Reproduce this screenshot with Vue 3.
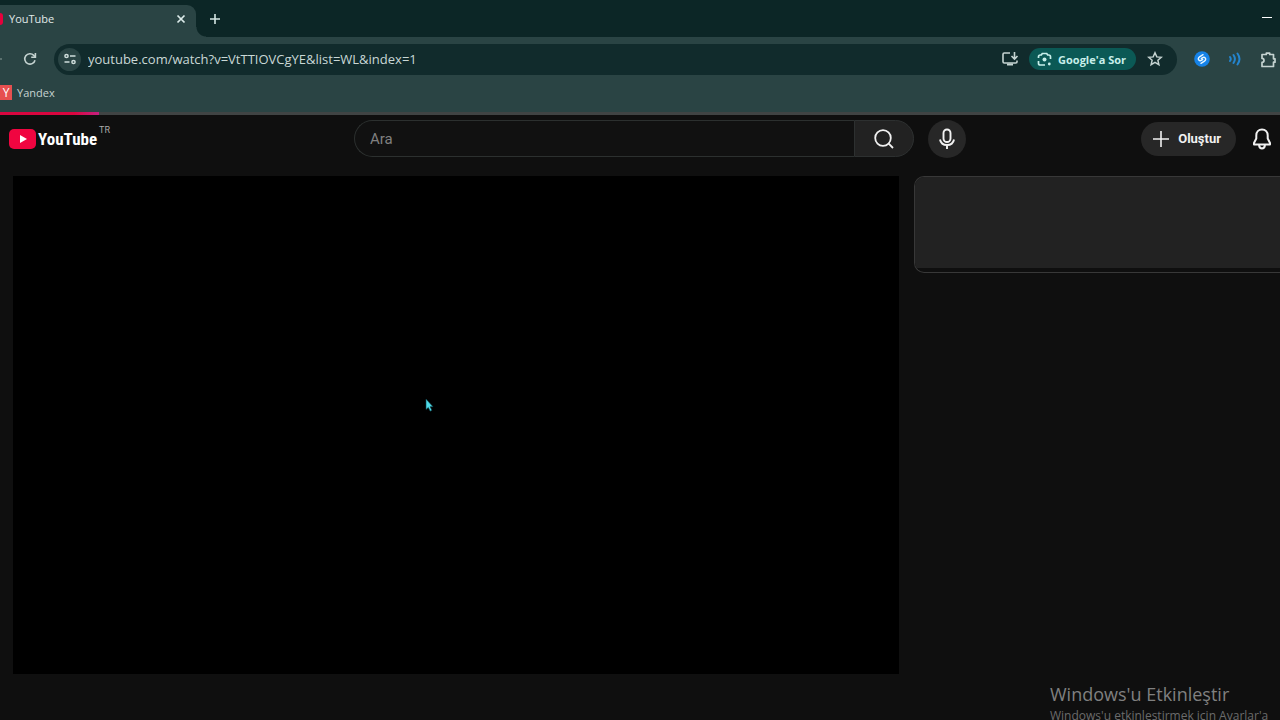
<script setup>
import { ref } from 'vue'

const address = ref('youtube.com/watch?v=VtTTIOVCgYE&list=WL&index=1')
const query = ref('')
</script>

<template>
  <div class="window">
    <div class="tabstrip">
      <div class="tab">
        <span class="favicon"></span>
        <span class="tab-title">YouTube</span>
        <button class="icon-btn tab-close" aria-label="Sekmeyi kapat">
          <svg width="10" height="10" viewBox="0 0 10 10"><path d="M1.5 1.5l7 7M8.5 1.5l-7 7" stroke="#dcebea" stroke-width="1.7" /></svg>
        </button>
      </div>
      <button class="icon-btn new-tab" aria-label="Yeni sekme">
        <svg width="12" height="12" viewBox="0 0 12 12"><path d="M6 1v10M1 6h10" stroke="#d5e6e4" stroke-width="1.6" /></svg>
      </button>
      <button class="icon-btn minimize" aria-label="Simge durumuna küçült">
        <svg width="10" height="10" viewBox="0 0 10 10"><path d="M0 3.5h10" stroke="#fff" stroke-width="1" /></svg>
      </button>
    </div>

    <div class="toolbar">
      <span class="forward"></span>
      <button class="icon-btn reload" aria-label="Yenile">
        <svg width="14" height="14" viewBox="0 0 14 14" fill="none" stroke="#c5d3d1" stroke-width="1.6"><path d="M12 8.2A5.2 5.2 0 1 1 10.8 3.4L12.3 5" /><path d="M12.4 1v4.3H8.2" /></svg>
      </button>
      <div class="omnibox">
        <button class="site-info" aria-label="Site bilgileri">
          <svg width="14" height="14" viewBox="0 0 14 14" fill="none" stroke="#cfdddb" stroke-width="1.5"><circle cx="3.5" cy="4" r="1.6" /><path d="M7 4h5.5M1.5 10h5" /><circle cx="10.5" cy="10" r="1.6" /></svg>
        </button>
        <input v-model="address" class="url" type="text" aria-label="Adres çubuğu" />
        <button class="icon-btn" aria-label="Uygulamayı yükle">
          <svg width="18" height="16" viewBox="0 0 18 16" fill="none" stroke="#c5d3d1" stroke-width="1.6"><path d="M9 2H3.200Q2 2 2 3.200v7.600Q2 12 3.200 12h11.600Q16 12 16 10.800V9.500" /><path d="M13.500 1v6.500M10.500 5l3 3 3-3" /><path d="M6 13.500h6" stroke-width="2" /></svg>
        </button>
        <button class="ask">
          <svg width="15" height="15" viewBox="0 0 15 15" fill="none" stroke="#c7efea" stroke-width="1.7"><path d="M1.500 6V4.800Q1.500 3 3.300 3h1l1-1.500h4.400l1 1.500h1q1.800 0 1.800 1.800V7M1.500 9v2.200Q1.500 13 3.300 13H8" /><circle cx="7.500" cy="7.500" r="2" fill="#c7efea" stroke="none" /><circle cx="12.300" cy="12" r="1.400" fill="#c7efea" stroke="none" /></svg>
          <span>Google'a Sor</span>
        </button>
        <button class="icon-btn star" aria-label="Yer işareti ekle">
          <svg width="16" height="16" viewBox="0 0 16 16" fill="none" stroke="#c5d3d1" stroke-width="1.500"><path d="M8 1.800l1.800 4.100 4.500.4-3.400 3 1 4.400L8 11.400l-3.900 2.300 1-4.400-3.400-3 4.500-.4z" /></svg>
        </button>
      </div>
      <div class="extensions">
        <button class="icon-btn" aria-label="Shazam">
          <svg width="16" height="16" viewBox="0 0 16 16" fill="none"><circle cx="8" cy="8" r="7.800" fill="#1683e8" /><path d="M9 3.700L5.600 5.800Q3.500 7.600 4.800 9.100q1.200 1.200 2.900.1l1-.8M7 12.300l3.400-2.100q2.100-1.800.8-3.300-1.200-1.200-2.900-.1l-1 .8" stroke="#e8f6ff" stroke-width="1.400" stroke-linecap="round" /></svg>
        </button>
        <button class="icon-btn" aria-label="Ses denetimi">
          <svg width="14" height="14" viewBox="0 0 14 14" fill="none" stroke="#2485cf" stroke-width="2" stroke-linecap="round"><path d="M2 5q1.500 2 0 4M5.500 3q2.800 4 0 8M9.500 1.500q4 5.500 0 11" /></svg>
        </button>
        <button class="icon-btn" aria-label="Uzantılar">
          <svg width="17" height="17" viewBox="0 0 17 17" fill="none" stroke="#c5d3d1" stroke-width="1.700" stroke-linejoin="round"><path d="M2 3.500h4.300v-1.300h3.400v1.300h3.800v4.300h1.500v3.400h-1.500v4.300H2v-4.100q2-.2 2-2t-2-2z" /></svg>
        </button>
      </div>
    </div>

    <nav class="bookmarks">
      <a href="#yandex"><span class="yandex">Y</span>Yandex</a>
    </nav>
    <div class="progress"><span></span></div>

    <header class="masthead">
      <a class="logo" href="#home">
        <svg width="27" height="20" viewBox="0 0 27 20"><rect width="27" height="20" rx="5" fill="#f00540" /><path d="M11 6l7 4-7 4z" fill="#fff" /></svg>
        <span class="wordmark">YouTube</span>
        <sup>TR</sup>
      </a>
      <div class="center">
        <form class="search" role="search" @submit.prevent>
          <input v-model="query" type="text" placeholder="Ara" aria-label="Ara" />
          <button aria-label="Aramayı başlat">
            <svg width="22" height="22" viewBox="0 0 22 22" fill="none" stroke="#f1f1f1" stroke-width="1.800"><circle cx="10" cy="10" r="7.800" /><path d="M15.700 15.700l4.300 4.300" /></svg>
          </button>
        </form>
        <button class="mic" aria-label="Sesle ara">
          <svg width="18" height="22" viewBox="0 0 18 22" fill="none" stroke="#f1f1f1" stroke-width="1.900"><rect x="5.500" y="1.500" width="7" height="12.500" rx="3.500" /><path d="M2 11.500q1 5.500 7 5.500t7-5.500M9 17v4" /></svg>
        </button>
      </div>
      <div class="actions">
        <button class="create">
          <svg width="18" height="18" viewBox="0 0 18 18"><path d="M9 1v16M1 9h16" stroke="#f1f1f1" stroke-width="1.600" /></svg>
          <span>Oluştur</span>
        </button>
        <button class="icon-btn" aria-label="Bildirimler">
          <svg width="20" height="22" viewBox="0 0 20 22" fill="none" stroke="#f1f1f1" stroke-width="2" stroke-linejoin="round"><path d="M10 1.500c-3.500 0-5.700 2.400-5.700 5.800v3.200L2 15v1.500h16V15l-2.300-4.500V7.300c0-3.400-2.200-5.800-5.700-5.800z" /><path d="M7 17q.5 3.500 3 3.500t3-3.500" /></svg>
        </button>
      </div>
    </header>

    <main class="watch">
      <section class="player" aria-label="Video oynatıcı">
        <svg class="pointer" width="9" height="14" viewBox="0 0 9 14"><path d="M1 1v10.500l2.300-2 1.900 3.700 1.700-.9-1.800-3.600H8z" fill="#4fdbe8" stroke="#0c3e46" stroke-width=".6" /></svg>
      </section>
      <aside class="playlist"><div></div></aside>
    </main>

    <div class="activation">
      <p class="activation-title">Windows'u Etkinleştir</p>
      <p>Windows'u etkinleştirmek için Ayarlar'a</p>
    </div>
  </div>
</template>

<style>
html,
body {
  margin: 0;
  background: #0f0f0f;
}
</style>

<style scoped>
.window {
  position: relative;
  height: 100vh;
  overflow: hidden;
  background: #0f0f0f;
  color: #f1f1f1;
  font-family: "Open Sans", "Noto Sans", sans-serif;
}
button,
input {
  margin: 0;
  padding: 0;
  border: 0;
  outline: 0;
  color: inherit;
  background: none;
  font-family: inherit;
}
a {
  color: inherit;
  text-decoration: none;
}
svg {
  display: block;
  flex: none;
}
.icon-btn {
  display: flex;
  align-items: center;
  justify-content: center;
}
.tabstrip {
  display: flex;
  align-items: center;
  height: 37px;
  padding-right: 8px;
  background: #0c2626;
}
.tab {
  position: relative;
  display: flex;
  align-items: center;
  align-self: flex-end;
  box-sizing: border-box;
  width: 196px;
  height: 32px;
  padding: 0 10px 5px 0;
  border-top-right-radius: 9px;
  background: #2a4444;
}
.tab::after {
  content: "";
  position: absolute;
  left: 100%;
  bottom: 0;
  width: 10px;
  height: 10px;
  background: radial-gradient(circle at 100% 0, transparent 9px, #2a4444 10px);
}
.favicon {
  width: 3px;
  height: 12px;
  border-radius: 0 5px 5px 0;
  background: #e6003c;
}
.tab-title {
  flex: 1;
  margin-left: 6px;
  font-size: 11px;
  color: #e0eae9;
}
.new-tab {
  margin-left: 13px;
}
.minimize {
  margin-left: auto;
}
.toolbar {
  display: flex;
  align-items: center;
  height: 44px;
  background: #2a4444;
}
.forward {
  width: 2px;
  height: 2px;
  border-radius: 1px;
  background: #6c807e;
}
.reload {
  margin-left: 21px;
}
.omnibox {
  flex: 1;
  display: flex;
  align-items: center;
  height: 31px;
  margin-left: 17px;
  padding: 0 14px 0 4px;
  border-radius: 16px;
  background: #112b2c;
}
.site-info {
  display: flex;
  align-items: center;
  justify-content: center;
  width: 23px;
  height: 23px;
  border-radius: 50%;
  background: #2a4444;
}
.url {
  flex: 1;
  min-width: 0;
  margin-left: 7px;
  font-size: 13px;
  color: #c9d8d6;
}
.ask {
  display: flex;
  align-items: center;
  gap: 6px;
  height: 22px;
  margin-left: 10px;
  padding: 0 10px 0 8px;
  border-radius: 11px;
  background: #0b5955;
  font-size: 11px;
  font-weight: 700;
  color: #c7efea;
}
.star {
  margin-left: 11px;
}
.extensions {
  display: flex;
  align-items: center;
  gap: 18px;
  margin-left: 17px;
  padding-right: 3px;
}
.bookmarks {
  display: flex;
  align-items: flex-start;
  height: 31px;
  background: #2a4444;
  font-size: 11px;
  color: #c5d3d1;
}
.bookmarks a {
  display: flex;
  align-items: center;
  gap: 5px;
  height: 23px;
}
.yandex {
  width: 12px;
  height: 15px;
  background: #e65050;
  color: #fff;
  font-size: 12px;
  line-height: 15px;
  text-align: center;
}
.progress {
  height: 3px;
  background: #404444;
}
.progress span {
  display: block;
  width: 99px;
  height: 3px;
  background: linear-gradient(90deg, #d9063f 75%, #c52080);
}
.masthead {
  display: grid;
  grid-template-columns: 345fr 612fr 314fr;
  align-items: center;
  height: 47px;
  padding-left: 9px;
  font-family: Roboto, sans-serif;
}
.logo {
  display: flex;
  align-items: center;
  gap: 2px;
}
.wordmark {
  font: 700 17px/20px "Liberation Sans Narrow", "Roboto Condensed", "Liberation Sans", sans-serif;
  color: #fff;
}
.logo sup {
  align-self: flex-start;
  margin-bottom: 10px;
  font-size: 9px;
  line-height: 2px;
  color: #aaa;
}
.center {
  display: flex;
  align-items: center;
  gap: 14px;
}
.search {
  flex: 1;
  display: flex;
  height: 37px;
}
.search input {
  flex: 1;
  min-width: 0;
  box-sizing: border-box;
  padding: 0 15px;
  border: 1px solid #2c302f;
  border-right: 0;
  border-radius: 19px 0 0 19px;
  background: #111;
  font-size: 15px;
}
.search input::placeholder {
  color: #808080;
  opacity: 1;
}
.search button {
  display: flex;
  align-items: center;
  justify-content: center;
  box-sizing: border-box;
  width: 60px;
  border: 1px solid #2d3030;
  border-radius: 0 19px 19px 0;
  background: #222;
}
.mic {
  display: flex;
  align-items: center;
  justify-content: center;
  width: 38px;
  height: 38px;
  border-radius: 50%;
  background: #272727;
}
.actions {
  display: flex;
  align-items: center;
  justify-content: flex-end;
  gap: 16px;
  padding-right: 8px;
}
.create {
  display: flex;
  align-items: center;
  gap: 8px;
  height: 34px;
  padding: 0 15px 0 11px;
  border-radius: 17px;
  background: #272727;
  font-size: 13px;
  font-weight: 700;
}
.watch {
  display: grid;
  grid-template-columns: 886fr 366fr;
  align-items: start;
  gap: 15px;
  padding: 14px 0 0 13px;
}
.player {
  position: relative;
  aspect-ratio: 16 / 9;
  background: #000;
}
.pointer {
  position: absolute;
  left: 412px;
  top: 222px;
}
.playlist {
  padding-bottom: 4px;
  border: 1px solid #383838;
  border-right: 0;
  border-radius: 10px 0 0 10px;
  overflow: hidden;
}
.playlist div {
  height: 91px;
  background: #222;
}
.activation {
  position: absolute;
  top: 682px;
  left: 1050px;
  white-space: nowrap;
  font-size: 12px;
  line-height: 19px;
  color: #6b6b6b;
}
.activation p {
  margin: 0;
}
.activation .activation-title {
  font-size: 18px;
  line-height: 24px;
  color: #808080;
}
</style>
